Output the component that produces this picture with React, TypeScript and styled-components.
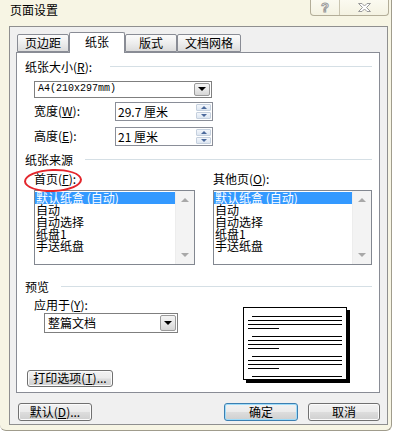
import React from 'react'
import styled, { createGlobalStyle } from 'styled-components'

const Global = createGlobalStyle`
  body {
    margin: 0;
    background: #ffffff;
    font-family: "Noto Sans CJK SC", "Liberation Sans", sans-serif;
    font-size: 12px;
    color: #000;
  }
`

const Window = styled.div`
  width: 392px;
  height: 431px;
  box-sizing: border-box;
  background: #f7f5e4;
  border-right: 1px solid #a09c8c;
  border-bottom: 1px solid #a09c8c;
  border-radius: 0 0 6px 6px;
  padding: 0 3px 5px 9px;
  display: flex;
  flex-direction: column;
`

const TitleBar = styled.div`
  height: 26px;
  display: flex;
  justify-content: space-between;
  align-items: flex-start;
`

const Title = styled.div`
  padding: 3px 0 0 1px;
  font-size: 12px;
  line-height: 14px;
`

const Caption = styled.div`
  display: flex;
  height: 15px;
  margin-right: -1px;
  border: 1px solid #b3ad98;
  border-top: none;
  border-radius: 0 0 4px 4px;
  background: linear-gradient(#fbfaf0, #f4f2e2);
  overflow: hidden;
`

const CapBtn = styled.div<{ $w: number }>`
  width: ${p => p.$w}px;
  display: flex;
  align-items: center;
  justify-content: center;
  & + & {
    border-left: 1px solid #c9c4b0;
  }
`

const HelpGlyph = styled.span`
  font-family: "Liberation Sans", sans-serif;
  font-weight: bold;
  font-size: 13px;
  line-height: 13px;
  color: #fdfdfd;
  -webkit-text-stroke: 1px #9a9a9a;
`

const Client = styled.div`
  height: 400px;
  box-sizing: border-box;
  border: 1px solid #8f8f8f;
  background: #f0f0f0;
  padding: 5px 7px 0 6px;
  display: flex;
  flex-direction: column;
`

const TabRow = styled.div`
  display: flex;
  align-items: flex-end;
  height: 21px;
  margin-bottom: -1px;
  padding-left: 1px;
  position: relative;
  z-index: 1;
`

const Tab = styled.div<{ $w: number; $active?: boolean }>`
  width: ${p => p.$w}px;
  height: ${p => (p.$active ? 21 : 18)}px;
  margin-bottom: ${p => (p.$active ? 0 : 1)}px;
  box-sizing: border-box;
  border: 1px solid #898c95;
  border-bottom: ${p => (p.$active ? 'none' : '1px solid #898c95')};
  border-radius: 2px 2px 0 0;
  background: ${p =>
    p.$active ? '#ffffff' : 'linear-gradient(#fbfbfb, #eeeeee 50%, #dcdcdc)'};
  display: flex;
  align-items: center;
  justify-content: center;
  line-height: 12px;
  padding-bottom: ${p => (p.$active ? 1 : 0)}px;
`

const Panel = styled.div`
  height: 341px;
  box-sizing: border-box;
  border: 1px solid #898c95;
  background: #ffffff;
  padding: 8px 7px 0 0;
  display: flex;
  flex-direction: column;
`

const Heading = styled.div<{ $gap: number; $top?: number }>`
  display: flex;
  align-items: center;
  height: 12px;
  line-height: 12px;
  padding-left: 8px;
  margin-top: ${p => p.$top ?? 0}px;
  gap: ${p => p.$gap}px;
  white-space: nowrap;
  &::after {
    content: '';
    flex: 1;
    height: 1px;
    background: #d5dfe5;
  }
`

const ComboBox = styled.div<{ $w: number; $h: number; $top: number }>`
  width: ${p => p.$w}px;
  height: ${p => p.$h}px;
  margin: ${p => p.$top}px 0 0 17px;
  box-sizing: border-box;
  border: 1px solid #7f7f7f;
  background: #fff;
  display: flex;
  align-items: center;
`

const ComboText = styled.div<{ $mono?: boolean }>`
  flex: 1;
  padding-left: 3px;
  font-family: ${p =>
    p.$mono ? '"Liberation Mono", "Noto Sans CJK SC", monospace' : 'inherit'};
  font-size: ${p => (p.$mono ? 10 : 12)}px;
  line-height: 12px;
`

const DropBtn = styled.div`
  width: 16px;
  align-self: stretch;
  margin: 1px;
  box-sizing: border-box;
  border: 1px solid #9a9a9a;
  border-radius: 2px;
  background: linear-gradient(#f4f4f4, #e8e8e8 50%, #d6d6d6);
  display: flex;
  align-items: center;
  justify-content: center;
  &::after {
    content: '';
    border-left: 4px solid transparent;
    border-right: 4px solid transparent;
    border-top: 4px solid #000;
  }
`

const FormRow = styled.div<{ $top: number }>`
  display: flex;
  align-items: center;
  margin-top: ${p => p.$top}px;
  padding-left: 17px;
`

const Label = styled.div<{ $w?: number }>`
  width: ${p => (p.$w ? `${p.$w}px` : 'auto')};
  line-height: 12px;
  white-space: nowrap;
`

const SpinBox = styled.div`
  width: 98px;
  height: 19px;
  box-sizing: border-box;
  border: 1px solid #8a8e98;
  background: #fff;
  display: flex;
`

const SpinText = styled.div`
  flex: 1;
  padding-left: 2px;
  line-height: 17px;
`

const SpinBtns = styled.div`
  width: 15px;
  margin: 1px;
  display: flex;
  flex-direction: column;
  gap: 1px;
`

const SpinHalf = styled.div<{ $up?: boolean }>`
  flex: 1;
  background: linear-gradient(#f3f6fb, #dde6f1);
  border: 1px solid #c5d0de;
  border-radius: 1px;
  display: flex;
  align-items: center;
  justify-content: center;
  &::after {
    content: '';
    border-left: 3px solid transparent;
    border-right: 3px solid transparent;
    ${p =>
      p.$up ? 'border-bottom: 3px solid #4c6a9c;' : 'border-top: 3px solid #4c6a9c;'}
  }
`

const Columns = styled.div`
  display: flex;
  margin-top: 7px;
  padding-left: 17px;
`

const Column = styled.div<{ $w?: number }>`
  width: ${p => (p.$w ? `${p.$w}px` : 'auto')};
  position: relative;
  display: flex;
  flex-direction: column;
`

const Circle = styled.div`
  position: absolute;
  left: -10px;
  top: -4px;
  width: 58px;
  height: 23px;
  box-sizing: border-box;
  border: 2px solid #e3262c;
  border-radius: 50%;
  transform: rotate(-2deg);
`

const ListBox = styled.div<{ $w: number }>`
  width: ${p => p.$w}px;
  height: 75px;
  margin-top: 5px;
  box-sizing: border-box;
  border: 1px solid #828790;
  background: #fff;
  display: flex;
`

const Items = styled.div`
  flex: 1;
  padding-top: 1px;
`

const Item = styled.div<{ $sel?: boolean }>`
  height: 12px;
  line-height: 12px;
  padding-left: 1px;
  white-space: nowrap;
  background: ${p => (p.$sel ? '#3399ff' : 'transparent')};
  color: ${p => (p.$sel ? '#ffffff' : '#000')};
`

const ScrollBar = styled.div`
  width: 19px;
  background: #f3f3f3;
  border-left: 1px solid #ededed;
  display: flex;
  flex-direction: column;
  justify-content: space-between;
  align-items: center;
  padding: 7px 0;
  box-sizing: border-box;
`

const Arrow = styled.div<{ $up?: boolean }>`
  border-left: 4px solid transparent;
  border-right: 4px solid transparent;
  ${p => (p.$up ? 'border-bottom: 4px solid #a8a8a8;' : 'border-top: 4px solid #a8a8a8;')}
`

const PreviewRow = styled.div`
  display: flex;
  height: 88px;
  margin-top: 6px;
`

const PreviewLeft = styled.div`
  width: 226px;
  padding-left: 10px;
  box-sizing: border-box;
  display: flex;
  flex-direction: column;
  align-items: flex-start;
`

const ApplyLabel = styled.div`
  margin-left: 7px;
  line-height: 12px;
`

const Btn = styled.div<{ $w: number; $h?: number; $focus?: boolean }>`
  width: ${p => p.$w}px;
  height: ${p => p.$h ?? 18}px;
  box-sizing: border-box;
  border: 1px solid ${p => (p.$focus ? '#3c7fb1' : '#707070')};
  border-radius: 3px;
  background: linear-gradient(#f2f2f2, #ebebeb 48%, #dddddd 52%, #cfcfcf);
  box-shadow: inset 0 0 0 1px ${p => (p.$focus ? '#9fdcf9' : '#fbfbfb')};
  display: flex;
  align-items: center;
  justify-content: center;
  line-height: 12px;
  white-space: nowrap;
`

const PrintBtn = styled(Btn)`
  margin-top: auto;
`

const PageArt = styled.svg`
  margin-top: 8px;
  display: block;
`

const ButtonRow = styled.div`
  display: flex;
  gap: 10px;
  margin-top: 10px;
  padding-left: 2px;
  & > :first-child {
    margin-right: auto;
  }
`

const paperSources = ['默认纸盒 (自动)', '自动', '自动选择', '纸盘1', '手送纸盘']

function PreviewPage() {
  const lines: React.ReactNode[] = []
  for (let g = 0; g < 4; g++) {
    const y = 9.5 + g * 20
    const rows: [number, number, number][] = [
      [9, 99, y],
      [5, 99, y + 4],
      [5, 99, y + 8],
      [5, 36, y + 12],
    ]
    rows.forEach(([x1, x2, yy], i) => {
      if (yy < 72) lines.push(<line key={`${g}-${i}`} x1={x1} x2={x2} y1={yy} y2={yy} stroke="#000" strokeWidth="1" />)
    })
  }
  return (
    <PageArt width="108" height="77" viewBox="0 0 108 77">
      <rect x="104" y="3" width="3" height="73" fill="#000" />
      <rect x="3" y="73" width="104" height="3" fill="#000" />
      <rect x="0.5" y="0.5" width="103" height="72" fill="#fff" stroke="#000" />
      {lines}
    </PageArt>
  )
}

function ListWithScroll({ width }: { width: number }) {
  return (
    <ListBox $w={width}>
      <Items>
        {paperSources.map((s, i) => (
          <Item key={s} $sel={i === 0}>{s}</Item>
        ))}
      </Items>
      <ScrollBar>
        <Arrow $up />
        <Arrow />
      </ScrollBar>
    </ListBox>
  )
}

export default function App() {
  return (
    <>
      <Global />
      <Window>
        <TitleBar>
          <Title>页面设置</Title>
          <Caption>
            <CapBtn $w={28}>
              <HelpGlyph>?</HelpGlyph>
            </CapBtn>
            <CapBtn $w={48}>
              <svg width="15" height="11" viewBox="0 0 15 11">
                <path
                  d="M1.5 1.5 H5 L7.5 4 L10 1.5 H13.5 L9.5 5.5 L13.5 9.5 H10 L7.5 7 L5 9.5 H1.5 L5.5 5.5 Z"
                  fill="#fdfdfd"
                  stroke="#9a9a9a"
                  strokeWidth="1"
                  strokeLinejoin="round"
                />
              </svg>
            </CapBtn>
          </Caption>
        </TitleBar>
        <Client>
          <TabRow>
            <Tab $w={52}>页边距</Tab>
            <Tab $w={56} $active>纸张</Tab>
            <Tab $w={52}>版式</Tab>
            <Tab $w={64}>文档网格</Tab>
          </TabRow>
          <Panel>
            <Heading $gap={18}>
              <span>纸张大小(<u>R</u>):</span>
            </Heading>
            <ComboBox $w={178} $h={17} $top={8}>
              <ComboText $mono>A4(210x297mm)</ComboText>
              <DropBtn />
            </ComboBox>
            <FormRow $top={4}>
              <Label $w={81}>宽度(<u>W</u>):</Label>
              <SpinBox>
                <SpinText>29.7 厘米</SpinText>
                <SpinBtns>
                  <SpinHalf $up />
                  <SpinHalf />
                </SpinBtns>
              </SpinBox>
            </FormRow>
            <FormRow $top={6}>
              <Label $w={81}>高度(<u>E</u>):</Label>
              <SpinBox>
                <SpinText>21 厘米</SpinText>
                <SpinBtns>
                  <SpinHalf $up />
                  <SpinHalf />
                </SpinBtns>
              </SpinBox>
            </FormRow>
            <Heading $gap={12} $top={8}>
              <span>纸张来源</span>
            </Heading>
            <Columns>
              <Column $w={180}>
                <Label>首页(<u>F</u>):</Label>
                <Circle />
                <ListWithScroll width={161} />
              </Column>
              <Column>
                <Label>其他页(<u>O</u>):</Label>
                <ListWithScroll width={159} />
              </Column>
            </Columns>
            <Heading $gap={12} $top={16}>
              <span>预览</span>
            </Heading>
            <PreviewRow>
              <PreviewLeft>
                <ApplyLabel>应用于(<u>Y</u>):</ApplyLabel>
                <ComboBox $w={134} $h={20} $top={2}>
                  <ComboText>整篇文档</ComboText>
                  <DropBtn />
                </ComboBox>
                <PrintBtn $w={86} $h={17}>
                  打印选项(<u>T</u>)...
                </PrintBtn>
              </PreviewLeft>
              <PreviewPage />
            </PreviewRow>
          </Panel>
          <ButtonRow>
            <Btn $w={74}>
              默认(<u>D</u>)...
            </Btn>
            <Btn $w={74} $focus>
              确定
            </Btn>
            <Btn $w={72}>取消</Btn>
          </ButtonRow>
        </Client>
      </Window>
    </>
  )
}
